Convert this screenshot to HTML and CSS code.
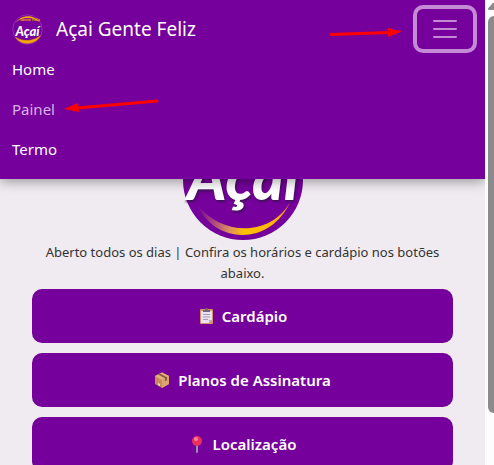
FILE: index.html
```html
<!DOCTYPE html>
<html lang="pt-BR">
  <head>
    <meta charset="UTF-8" />
    <meta name="viewport" content="width=device-width, initial-scale=1" />
    <title>Açai Gente Feliz</title>
    <link rel="stylesheet" href="styles.css">
  </head>
  <body>
    <div class="page">
      <nav class="navbar">
        <div class="navbar-top">
          <a class="navbar-brand" href="#">
            <svg class="brand-logo" viewBox="0 0 120 120" aria-hidden="true">
              <circle cx="60" cy="60" r="57" fill="none" stroke="#a95cc4" stroke-width="2" />
              <path d="M16 32C36 2 84 0 106 32C84 11 40 9 16 32Z" fill="#f5a800" />
              <path d="M14 90C34 122 88 122 110 84C84 107 40 108 14 90Z" fill="#f5a800" stroke="#f5a800" stroke-width="2" />
              <text class="logo-small-text" x="70" y="29">Gente Feliz</text>
              <text class="logo-text brand-logo-text" x="60" y="84">Açaí</text>
            </svg>
            <span>Açai Gente Feliz</span>
          </a>
          <button class="navbar-toggler" type="button" aria-label="Menu" aria-expanded="true">
            <svg viewBox="0 0 30 30" width="30" height="30" aria-hidden="true">
              <path d="M4 7h22M4 15h22M4 23h22" />
            </svg>
          </button>
        </div>
        <ul class="navbar-nav">
          <li><a class="nav-link" href="#">Home</a></li>
          <li><a class="nav-link active" href="#">Painel</a></li>
          <li><a class="nav-link" href="#">Termo</a></li>
        </ul>
      </nav>

      <main class="content">
        <svg class="logo" viewBox="0 0 120 120" role="img" aria-label="Açaí">
          <defs>
            <linearGradient id="smile" x1="0" x2="1" y1="0" y2="0">
              <stop offset="0" stop-color="#75009b" />
              <stop offset="0.35" stop-color="#e09060" />
              <stop offset="0.5" stop-color="#ffc000" />
              <stop offset="0.85" stop-color="#ffb400" />
              <stop offset="1" stop-color="#e8863a" />
            </linearGradient>
          </defs>
          <circle cx="60" cy="60" r="60" fill="#75009b" />
          <path d="M14 84C30 124 88 128 108 80C90 117 38 117 14 84Z" fill="url(#smile)" />
          <text class="logo-text" x="60" y="80">Açaí</text>
        </svg>
        <p class="intro">Aberto todos os dias | Confira os horários e cardápio nos botões abaixo.</p>

        <div class="links">
          <a class="link-button" href="#">
            <svg viewBox="0 0 16 18" aria-hidden="true">
              <rect x="2" y="2" width="13" height="15" rx="1" fill="#d79363" />
              <path d="M3 4h11v9l-3 3H3z" fill="#e9e2f2" />
              <path d="M14 13h-3v3z" fill="#b9a9cb" />
              <path d="M5 3h2c0-3 3-3 3 0h2v2H5z" fill="#70667c" />
              <path d="M5 7.500h7M5 10h7M5 12.500h5" stroke="#a99bb9" />
            </svg>
            Cardápio
          </a>
          <a class="link-button" href="#">
            <svg viewBox="0 0 16 18" aria-hidden="true">
              <path d="M1 5l7-3.500L15 5v8l-7 4-7-4z" fill="#c98b5c" />
              <path d="M1 5l7-3.500L15 5 8 9z" fill="#e5b07b" />
              <path d="M8 9l7-4v8l-7 4z" fill="#dba46f" />
              <path d="M4 3.500L11 7.200v3l2-1v-3L6 2.500z" fill="#8e5a3b" />
              <path d="M4 12l2 1v2l-2-1z" fill="#f0dccb" />
            </svg>
            Planos de Assinatura
          </a>
          <a class="link-button" href="#">
            <svg viewBox="0 0 16 18" aria-hidden="true">
              <path d="M8 9v8" stroke="#9c8fae" stroke-width="2" stroke-linecap="round" />
              <circle cx="8" cy="6" r="5" fill="#e8305f" />
              <circle cx="7" cy="4" r="2" fill="#ff7f91" />
            </svg>
            Localização
          </a>
        </div>
      </main>

      <svg class="arrow arrow-toggler" viewBox="0 0 74 14" aria-hidden="true">
        <path d="M2 8.500L60 6.500" />
        <polygon points="59,2 73,5.500 59,11" />
      </svg>
      <svg class="arrow arrow-painel" viewBox="0 0 96 16" aria-hidden="true">
        <path d="M94 3L14 10" />
        <polygon points="15,5 1,11 16,14" />
      </svg>
    </div>

    <div class="scrollbar" aria-hidden="true">
      <div class="scrollbar-up"></div>
      <div class="scrollbar-thumb"></div>
    </div>
  </body>
</html>
```
FILE: styles.css
```css
* {
  box-sizing: border-box;
}

body {
  margin: 0;
  display: flex;
  height: 100vh;
  overflow: hidden;
  background: #fdfdfd;
  color: #333;
  font-family: "Segoe UI", "Noto Sans", sans-serif;
}

.page {
  position: relative;
  flex: 1;
  min-width: 0;
  overflow: hidden;
  background: #f0ebf0;
}

/* Navbar, opened over the page */
.navbar {
  position: absolute;
  top: 0;
  left: 0;
  right: 0;
  z-index: 10;
  padding: 8px 12px 9px;
  background: #75009b;
  box-shadow: 0 2px 12px rgba(0, 0, 0, 0.4);
}

.navbar-top {
  display: flex;
  align-items: center;
  justify-content: space-between;
  height: 42px;
}

.navbar-brand {
  display: flex;
  align-items: center;
  gap: 13px;
  color: #fff;
  font-size: 19px;
  text-decoration: none;
}

.brand-logo {
  width: 31px;
  height: 31px;
}

.navbar-toggler {
  display: flex;
  align-items: center;
  justify-content: center;
  width: 56px;
  height: 40px;
  padding: 0;
  border: 0;
  border-radius: 6px;
  background: transparent;
  box-shadow: 0 0 0 4px #c48ad6;
  cursor: pointer;
}

.navbar-toggler path {
  stroke: #c48ad6;
  stroke-width: 2;
  stroke-linecap: round;
}

.navbar-nav {
  margin: 0;
  padding: 0;
  list-style: none;
}

.nav-link {
  display: block;
  padding: 7px 0 9px;
  color: #fff;
  font-size: 15px;
  line-height: 24px;
  text-decoration: none;
}

.nav-link.active {
  color: #d9b3e5;
}

/* Content */
.content {
  padding: 120px 32px 0;
  text-align: center;
}

.logo {
  display: block;
  width: 120px;
  height: 120px;
  margin: 0 auto;
}

.logo-text {
  fill: #fff;
  font-family: Lato, sans-serif;
  font-size: 60px;
  font-style: italic;
  font-weight: 900;
  text-anchor: middle;
  filter: drop-shadow(1px 2px 1px #40105a);
}

.brand-logo-text {
  font-size: 50px;
  filter: none;
}

.logo-small-text {
  fill: #f5a800;
  font-size: 14px;
  font-weight: 700;
  text-anchor: middle;
}

.intro {
  margin: 2px 0 5px;
  font-size: 13px;
  line-height: 21px;
}

.links {
  display: flex;
  flex-direction: column;
  gap: 10px;
}

.link-button {
  display: flex;
  align-items: center;
  justify-content: center;
  gap: 8px;
  height: 54px;
  border-radius: 10px;
  background: #75009b;
  color: #fff;
  font-size: 15px;
  font-weight: 600;
  text-decoration: none;
}

.link-button svg {
  width: 16px;
  height: 18px;
  fill: none;
}

/* Red arrows */
.arrow {
  position: absolute;
  z-index: 20;
  fill: #f00;
}

.arrow path {
  stroke: #f00;
  stroke-width: 3;
  stroke-linecap: round;
}

.arrow-toggler {
  top: 26px;
  left: 329px;
  width: 74px;
}

.arrow-painel {
  top: 98px;
  left: 63px;
  width: 96px;
}

/* Scrollbar */
.scrollbar {
  flex: none;
  width: 9px;
  padding: 3px 0 0 3px;
  overflow: hidden;
}

.scrollbar-up {
  width: 12px;
  height: 7px;
  margin-bottom: 6px;
  background: #8b8b8b;
  clip-path: polygon(40% 0, 60% 0, 100% 80%, 95% 100%, 5% 100%, 0 80%);
}

.scrollbar-thumb {
  width: 12px;
  height: 86%;
  border-radius: 6px;
  background: #8b8b8b;
}
```
